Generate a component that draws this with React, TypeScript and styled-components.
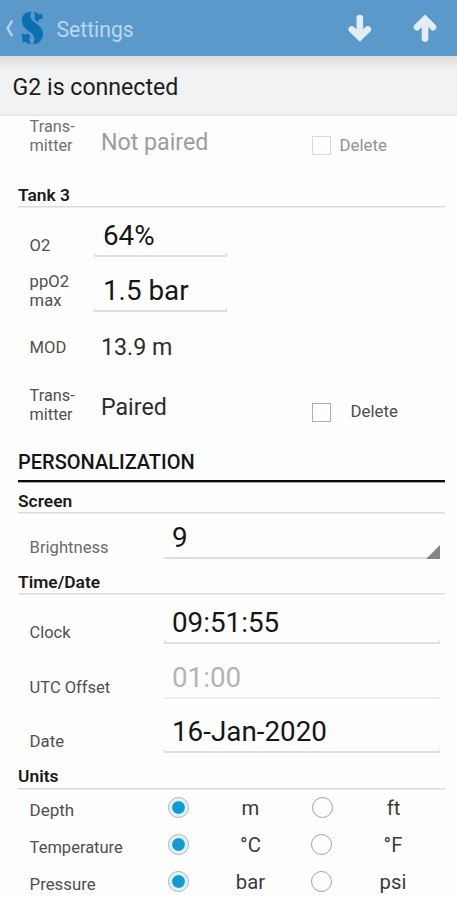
import React from 'react';
import styled, { createGlobalStyle } from 'styled-components';

const GlobalStyle = createGlobalStyle`
  *, *::before, *::after { box-sizing: border-box; }
  body {
    margin: 0;
    background: #fefefe;
    font-family: Roboto, "Liberation Sans", sans-serif;
    color: #1c1c1c;
  }
`;

const Screen = styled.div`
  width: 457px;
  height: 900px;
  overflow: hidden;
  display: flex;
  flex-direction: column;
`;

const AppBar = styled.header`
  flex: none;
  height: 56px;
  display: flex;
  align-items: flex-start;
  background: #5c99cb;
`;

const AppTitle = styled.h1`
  margin: 17px 0 0 12.4px;
  flex: 1;
  font-size: 21.2px;
  line-height: 25px;
  font-weight: 400;
  color: #b9d8f2;
`;

const BackIcon = styled.svg`
  width: 20px;
  height: 56px;
`;

const Logo = styled.svg`
  width: 24px;
  height: 36px;
  margin-top: 10px;
`;

const BarAction = styled.button`
  border: 0;
  padding: 0;
  background: none;
  width: 65px;
  height: 56px;
`;

const ConnectionBar = styled.div`
  flex: none;
  height: 60px;
  padding: 18px 0 0 12.6px;
  border-bottom: 2px solid #e8e8e9;
  background: linear-gradient(#dedbdb 0, #e4e2e2 5px, #ebebed 9px, #f1f2f4 16px);
  font-size: 23.1px;
  line-height: 28px;
`;

const Content = styled.main`
  padding-left: 18px;
  width: 445px;
`;

const Row = styled.div<{ $h: number; $wide?: boolean }>`
  display: grid;
  grid-template-columns: ${p => (p.$wide ? '146px 276px' : '75.5px 218px 134px')};
  align-items: start;
  height: ${p => p.$h}px;
`;

const UnitRow = styled.div`
  display: grid;
  grid-template-columns: 150px 43px 79px 64px 78px;
  align-items: start;
  height: 37px;
`;

const Label = styled.div<{ $top: number; $size?: number; $tone?: string }>`
  padding: ${p => p.$top}px 0 0 11.6px;
  font-size: ${p => p.$size ?? 16.6}px;
  line-height: 19px;
  white-space: pre-line;
  color: ${p => p.$tone ?? '#4f4f4f'};
`;

const Value = styled.div<{ $top: number; $muted?: boolean }>`
  padding: ${p => p.$top}px 0 0 7.5px;
  font-size: 23.2px;
  line-height: 28px;
  color: ${p => (p.$muted ? '#9c9c9c' : '#2c2c2c')};
`;

const Field = styled.div<{ $top: number; $w?: number; $muted?: boolean; $select?: boolean }>`
  margin-top: ${p => p.$top}px;
  width: ${p => p.$w ?? 276}px;
  height: 38px;
  padding-left: ${p => (p.$w ? 9.5 : 8)}px;
  display: flex;
  justify-content: space-between;
  align-items: flex-start;
  font-size: 27.8px;
  line-height: 33px;
  color: ${p => (p.$muted ? '#b4b4b4' : '#161616')};
  --line: ${p => (p.$muted ? '#efefef' : '#e0e0e0')};
  background:
    linear-gradient(var(--line), var(--line)) 0 100% / 100% 2px no-repeat,
    linear-gradient(var(--line), var(--line)) 0 100% / ${p => (p.$select ? 0 : 1)}px 4px no-repeat,
    linear-gradient(var(--line), var(--line)) 100% 100% / ${p => (p.$select ? 0 : 1)}px 4px no-repeat;
`;

const Corner = styled.svg`
  width: 14px;
  height: 14px;
  align-self: flex-end;
`;

const GroupTitle = styled.h2`
  margin: 0;
  width: 427px;
  height: 32px;
  border-bottom: 2px solid #0c0c10;
  box-shadow: 0 1px #a5a5a8;
  font-size: 20px;
  line-height: 24px;
  font-weight: 500;
  color: #151515;
`;

const SectionTitle = styled.h3<{ $h: number; $top?: number }>`
  margin: 0;
  width: 427px;
  height: ${p => p.$h}px;
  padding-top: ${p => p.$top ?? 0}px;
  border-bottom: 1px solid #dcdcdc;
  box-shadow: 0 1px #ececec;
  font-size: 17.4px;
  line-height: 20px;
  font-weight: 600;
  color: #1a1a1a;
`;

const CheckOption = styled.label<{ $top: number; $gap: number; $disabled?: boolean }>`
  display: flex;
  gap: ${p => p.$gap}px;
  margin-top: ${p => p.$top}px;
  font-size: 16.8px;
  line-height: 19px;
  color: ${p => (p.$disabled ? '#919191' : '#4c4c4c')};
`;

const CheckBox = styled.span<{ $disabled?: boolean }>`
  width: 19px;
  height: 19px;
  margin-top: ${p => (p.$disabled ? 0 : 1)}px;
  border: 1px solid ${p => (p.$disabled ? '#d9d9d9' : '#adadad')};
`;

const Radio = styled.span<{ $on?: boolean; $shift?: number }>`
  width: 21px;
  height: 21px;
  margin: 8px 0 0 ${p => p.$shift ?? 0}px;
  border-radius: 50%;
  border: 1px solid ${p => (p.$on ? '#a5b0b6' : '#a0a0a0')};
  background: ${p => (p.$on ? 'radial-gradient(circle, #129bd0 0 5.8px, #d5f0fa 6.8px, #e9f7fc 9px)' : 'transparent')};
`;

const UnitName = styled.span<{ $shift?: number }>`
  margin-left: ${p => p.$shift ?? 0}px;
  padding-top: 7px;
  text-align: center;
  font-size: 20.3px;
  line-height: 24px;
  color: #3a3a3a;
`;

function Arrow({ up }: { up?: boolean }) {
  return (
    <svg width="65" height="56" viewBox="0 0 65 56" fill="none" stroke="#e2edf6" strokeWidth="6.6" strokeLinecap="round">
      {up ? (
        <path d="M25 27.2 L33 19.2 L41 27.2 M33 22 V38.6" />
      ) : (
        <path d="M24.8 29.4 L32.8 37.2 L40.8 29.4 M32.8 34 V18" />
      )}
    </svg>
  );
}

const units = [
  { name: 'Depth', size: 17, metric: 'm', imperial: 'ft', shift: 1 },
  { name: 'Temperature', size: 16.5, metric: '°C', imperial: '°F', shift: 0 },
  { name: 'Pressure', size: 16.8, metric: 'bar', imperial: 'psi', shift: 0 },
];

export default function App() {
  return (
    <Screen>
      <GlobalStyle />
      <AppBar>
        <BackIcon viewBox="0 0 20 56" fill="none" stroke="#b4d3ec" strokeWidth="2.4">
          <path d="M12.2 20.5 L7.6 28.3 L12.2 36.2" />
        </BackIcon>
        <Logo viewBox="60 30 72 108" fill="#0b6fb2">
          <path d="M94 35 C74 35 64 47 66 66 C68 84 86 92 96 101 C104 109 105 120 99 133 C119 132 130 117 129 98 C127 79 108 71 98 62 C90 54 90 45 94 35Z" />
          <path d="M100 35 C108 36 114 39 118 44 L126 40 L128 56 L120 57 L112 65 L103 58 C107 50 105 42 100 35Z" />
          <path d="M65 98 L75 104 L82 100 L91 107 C86 114 88 125 93 133 C86 132 80 129 77 125 L68 128Z" />
        </Logo>
        <AppTitle>Settings</AppTitle>
        <BarAction aria-label="Download"><Arrow /></BarAction>
        <BarAction aria-label="Upload"><Arrow up /></BarAction>
      </AppBar>
      <ConnectionBar>G2 is connected</ConnectionBar>
      <Content>
        <Row $h={69}>
          <Label $top={1} $size={16.3} $tone="#707070">{'Trans-\nmitter'}</Label>
          <Value $top={12} $muted>Not paired</Value>
          <CheckOption $top={20} $gap={9} $disabled><CheckBox $disabled />Delete</CheckOption>
        </Row>
        <SectionTitle $h={22}>Tank 3</SectionTitle>
        <Row $h={55}>
          <Label $top={29}>O2</Label>
          <Field $top={12} $w={133}>64%</Field>
        </Row>
        <Row $h={58}>
          <Label $top={10}>{'ppO2\nmax'}</Label>
          <Field $top={12} $w={133}>1.5 bar</Field>
        </Row>
        <Row $h={60}>
          <Label $top={18}>MOD</Label>
          <Value $top={13}>13.9 m</Value>
        </Row>
        <Row $h={70}>
          <Label $top={6} $size={16.3}>{'Trans-\nmitter'}</Label>
          <Value $top={13}>Paired</Value>
          <CheckOption $top={22} $gap={20}><CheckBox />Delete</CheckOption>
        </Row>
        <GroupTitle>PERSONALIZATION</GroupTitle>
        <SectionTitle $h={31} $top={9}>Screen</SectionTitle>
        <Row $h={59} $wide>
          <Label $top={25} $tone="#6a6a6a">Brightness</Label>
          <Field $top={8} $select>
            9
            <Corner viewBox="0 0 14 14"><path d="M14 0 V14 H0Z" fill="#858585" /></Corner>
          </Field>
        </Row>
        <SectionTitle $h={22}>Time/Date</SectionTitle>
        <Row $h={54} $wide>
          <Label $top={29} $size={16.4}>Clock</Label>
          <Field $top={12}>09:51:55</Field>
        </Row>
        <Row $h={55} $wide>
          <Label $top={30} $size={16.5}>UTC Offset</Label>
          <Field $top={13} $muted>01:00</Field>
        </Row>
        <Row $h={63} $wide>
          <Label $top={29} $size={16.8}>Date</Label>
          <Field $top={12}>16-Jan-2020</Field>
        </Row>
        <SectionTitle $h={23}>Units</SectionTitle>
        {units.map(u => (
          <UnitRow key={u.name}>
            <Label $top={12} $size={u.size}>{u.name}</Label>
            <Radio $on />
            <UnitName>{u.metric}</UnitName>
            <Radio $shift={21 + u.shift} />
            <UnitName $shift={u.shift}>{u.imperial}</UnitName>
          </UnitRow>
        ))}
      </Content>
    </Screen>
  );
}
